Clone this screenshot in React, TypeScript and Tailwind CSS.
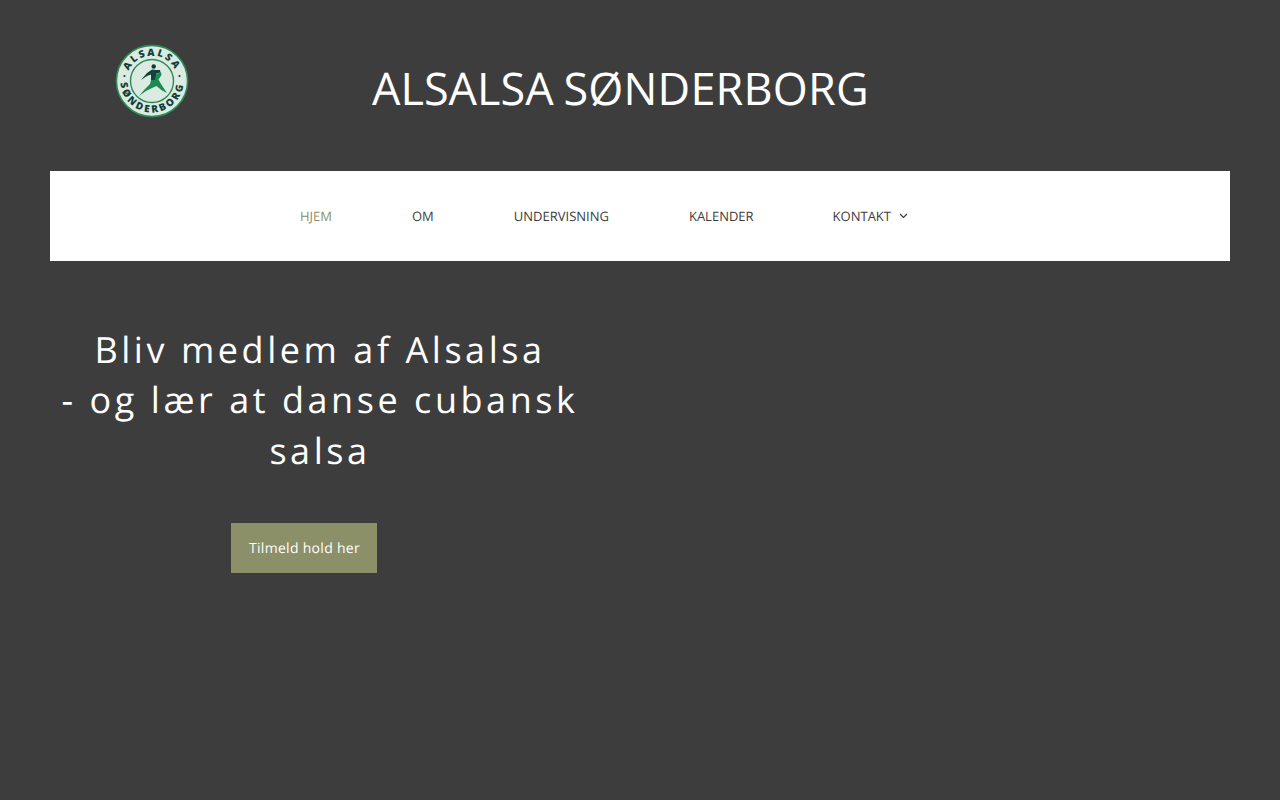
function Logo() {
  return (
    <svg width="74" height="74" viewBox="0 0 74 74" className="block">
      <defs>
        <path id="top" d="M 11.5 37 A 25.5 25.5 0 0 1 62.5 37" />
        <path id="bottom" d="M 5.5 37 A 31.5 31.5 0 0 0 68.5 37" />
      </defs>
      <circle cx="37" cy="37" r="35.6" fill="#dcebe2" stroke="#2c8a57" strokeWidth="1.6" />
      <circle cx="37" cy="37" r="21.5" fill="#dcebe2" stroke="#2c8a57" strokeWidth="1.4" />
      <text fontSize="10" fontWeight="800" fill="#123f3a" letterSpacing="2" fontFamily="'Open Sans', sans-serif">
        <textPath href="#top" startOffset="50%" textAnchor="middle">ALSALSA</textPath>
      </text>
      <text fontSize="10" fontWeight="800" fill="#123f3a" letterSpacing="2.4" fontFamily="'Open Sans', sans-serif">
        <textPath href="#bottom" startOffset="50%" textAnchor="middle">SØNDERBORG</textPath>
      </text>
      <circle cx="9.5" cy="32" r="1.1" fill="#123f3a" />
      <circle cx="64.5" cy="32" r="1.1" fill="#123f3a" />
      <circle cx="38.7" cy="22.5" r="2.2" fill="#0e3b36" />
      <path d="M26 36 L32 29 L37 25.5 L41 26 L45 26 L45.5 28.5 L41.5 29.5 L41 35 L39 39 L36 37 L36 30.5 L32 32 Z" fill="#12433c" />
      <path d="M41 30 L46 28 L46.5 31 L43.5 35.5 L46 40 L52 49 L47 46.5 L41.5 42 L37 44 L31 47 L24 52 L30 45 L35 40 L36 36 L40 36 Z" fill="#1c8a53" />
    </svg>
  );
}

function Chevron() {
  return (
    <svg width="9" height="6" viewBox="0 0 9 6" fill="none" className="ml-[8px] mt-[-1px]">
      <path d="M1 1 L4.5 4.5 L8 1" stroke="#3d3d3d" strokeWidth="1.2" />
    </svg>
  );
}

export default function App() {
  return (
    <div className="min-h-[800px] bg-[#3d3d3d] px-[50px] font-['Open_Sans',sans-serif] [text-rendering:geometricPrecision]">
      <header className="flex h-[171px]">
        <div className="flex w-[203px] justify-center pt-[44px]">
          <Logo />
        </div>
        <h1 className="ml-[119px] mt-[57px] h-fit text-[45px] leading-[64px] font-normal text-white [word-spacing:-2px]">
          ALSALSA <span className="tracking-[0.2px]">SØNDERBORG</span>
        </h1>
      </header>
      <nav className="flex h-[90px] items-center bg-white pl-[250px] pt-[1px] text-[13px] text-[#3d3d3d]">
        <a className="text-[#8c9068]">HJEM</a>
        <a className="ml-[80px]">OM</a>
        <a className="ml-[80px]">UNDERVISNING</a>
        <a className="ml-[80px]">KALENDER</a>
        <a className="ml-[79px] flex items-center">KONTAKT<Chevron /></a>
      </nav>
      <main className="w-[540px] pt-[64px]">
        <h2 className="text-center text-[36px] leading-[50.4px] font-normal tracking-[3.55px] text-white">
          Bliv medlem af Alsalsa
          <br />- og lær at danse cubansk salsa
        </h2>
        <div className="mt-[47px] pl-[181px]">
          <a className="flex h-[50px] w-[146px] items-center justify-center bg-[#8c9068] pl-[1px] pt-[2px] text-sm tracking-[0.3px] text-white">Tilmeld hold her</a>
        </div>
      </main>
    </div>
  );
}
